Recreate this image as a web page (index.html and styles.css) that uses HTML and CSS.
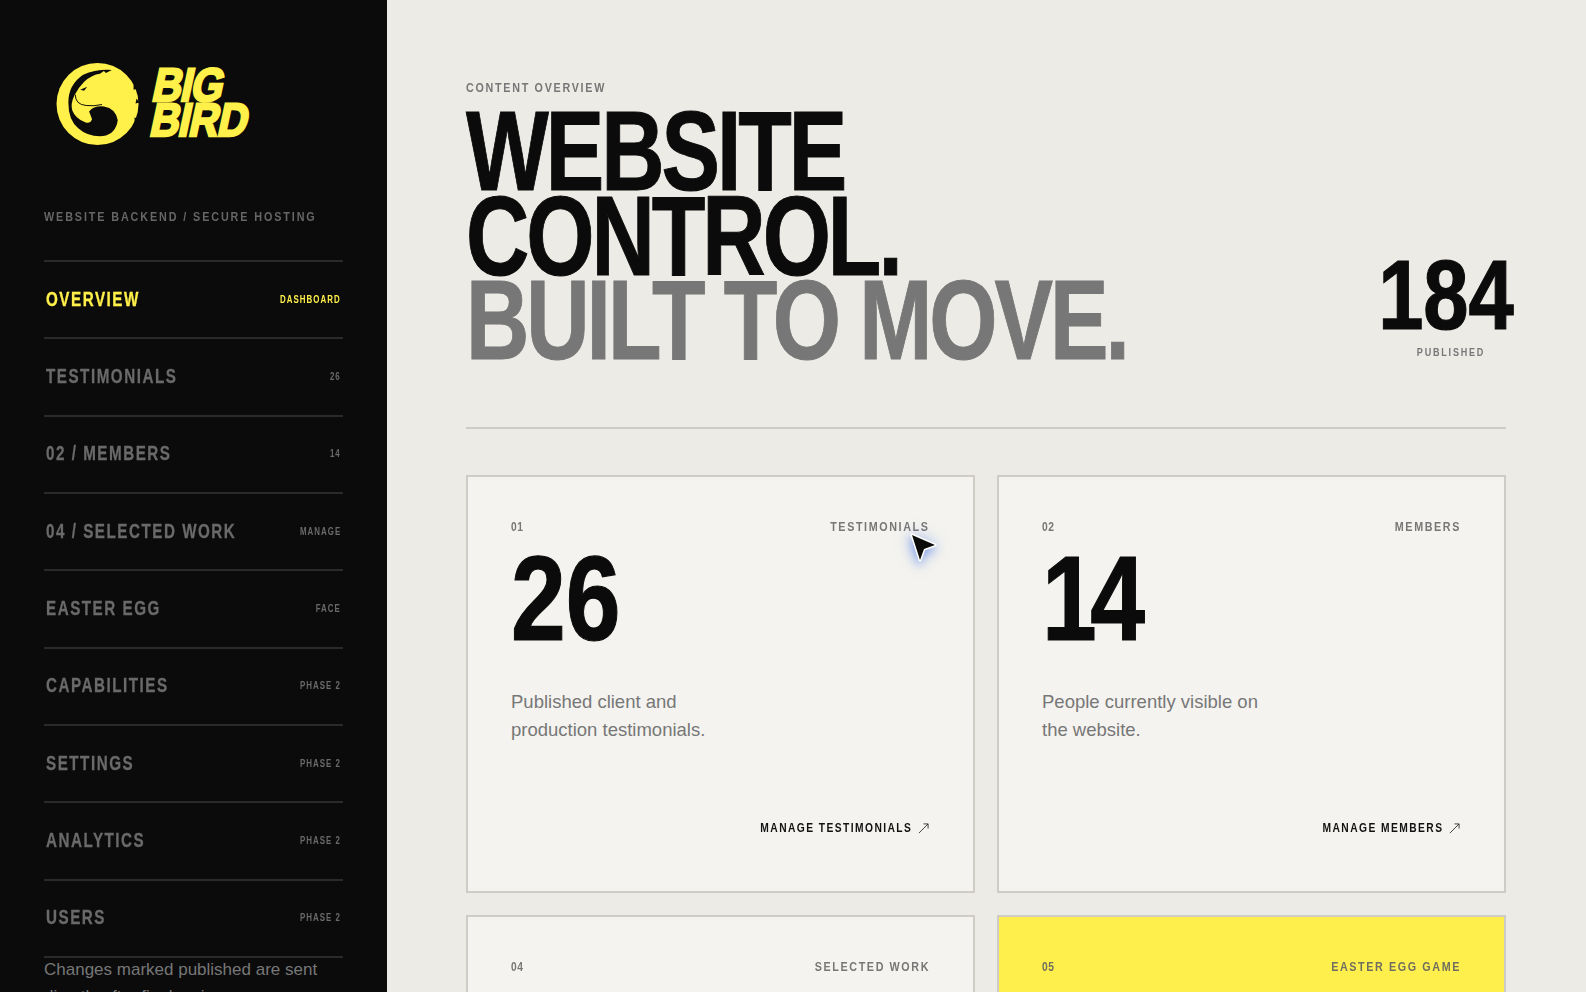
FILE: index.html
```html
<!DOCTYPE html>
<html lang="en">
<head>
<meta charset="utf-8">
<title>Big Bird — Content Overview</title>
<link rel="stylesheet" href="styles.css">
</head>
<body>
<div class="app">
  <aside class="sidebar">
    <div class="logo">
      <svg class="logo-mark" viewBox="0 0 84 84" aria-hidden="true">
        <circle cx="41.500" cy="41.500" r="41.500" fill="#fff04a"/>
        <path d="M56 7 Q40 6 27 12 Q12 22 12 40 Q12 58 22 66 Q32 75 47 74 Q60 72 62 58 Q60 46 48 44 Q38 43 33 49 L36 57 Q34 62 29 60 Q19 56 16 48 Q14 42 18 33 Q22 25 28 19 Q36 12 44 11 L48 8 L50 10 Z" fill="#0b0b0b"/>
        <path d="M19 32 Q19 42 30 43 Q38 44 46 42" fill="none" stroke="#0b0b0b" stroke-width="1"/>
        <path d="M24 27 L31 24 L28 28 Z" fill="#0b0b0b"/>
        <path d="M78 22 L82 26 L78 27 Z M81 36 L84 40 L80 41 Z M79 55 L84 58 L79 60 Z" fill="#0b0b0b"/>
      </svg>
      <div class="wordmark"><span class="wm-big">BIG</span><span>BIRD</span></div>
    </div>
    <p class="tagline">WEBSITE BACKEND / SECURE HOSTING</p>
    <nav class="nav">
      <a class="nav-row active"><span class="nav-name">OVERVIEW</span><span class="nav-meta">DASHBOARD</span></a>
      <a class="nav-row"><span class="nav-name">TESTIMONIALS</span><span class="nav-meta">26</span></a>
      <a class="nav-row"><span class="nav-name">02 / MEMBERS</span><span class="nav-meta">14</span></a>
      <a class="nav-row"><span class="nav-name">04 / SELECTED WORK</span><span class="nav-meta">MANAGE</span></a>
      <a class="nav-row"><span class="nav-name">EASTER EGG</span><span class="nav-meta">FACE</span></a>
      <a class="nav-row"><span class="nav-name">CAPABILITIES</span><span class="nav-meta">PHASE 2</span></a>
      <a class="nav-row"><span class="nav-name">SETTINGS</span><span class="nav-meta">PHASE 2</span></a>
      <a class="nav-row"><span class="nav-name">ANALYTICS</span><span class="nav-meta">PHASE 2</span></a>
      <a class="nav-row"><span class="nav-name">USERS</span><span class="nav-meta">PHASE 2</span></a>
    </nav>
    <p class="side-note">Changes marked published are sent directly after final review.</p>
  </aside>
  <main class="main">
    <header class="hero">
      <div class="hero-copy">
        <p class="eyebrow">CONTENT OVERVIEW</p>
        <h1 class="headline">
          <span class="h-line">WEBSITE</span>
          <span class="h-line">CONTROL.</span>
          <span class="h-line h-three">BUILT TO MOVE.</span>
        </h1>
      </div>
      <div class="stat">
        <div class="stat-num">184</div>
        <div class="stat-label">PUBLISHED</div>
      </div>
    </header>
    <section class="cards">
      <article class="card">
        <div class="card-top"><span class="idx">01</span><span class="lbl">TESTIMONIALS</span></div>
        <div class="card-num">26</div>
        <p class="card-text">Published client and<br>production testimonials.</p>
        <a class="card-link"><span class="link-text">MANAGE TESTIMONIALS</span>
          <svg class="arrow" viewBox="0 0 12 12" aria-hidden="true"><path d="M1 11 L11 1 M6 1 H11 V6" fill="none" stroke="#222" stroke-width="0.900"/></svg>
        </a>
      </article>
      <article class="card">
        <div class="card-top"><span class="idx">02</span><span class="lbl">MEMBERS</span></div>
        <div class="card-num card-num-tight">14</div>
        <p class="card-text">People currently visible on<br>the website.</p>
        <a class="card-link"><span class="link-text">MANAGE MEMBERS</span>
          <svg class="arrow" viewBox="0 0 12 12" aria-hidden="true"><path d="M1 11 L11 1 M6 1 H11 V6" fill="none" stroke="#222" stroke-width="0.900"/></svg>
        </a>
      </article>
      <article class="card">
        <div class="card-top"><span class="idx">04</span><span class="lbl">SELECTED WORK</span></div>
      </article>
      <article class="card card-yellow">
        <div class="card-top"><span class="idx">05</span><span class="lbl">EASTER EGG GAME</span></div>
      </article>
    </section>
  </main>
</div>
<svg class="cursor" viewBox="0 0 60 60" aria-hidden="true">
  <path class="cursor-arrow" d="M18 15 L41 25 L30 29 L26 40 Z"/>
</svg>
</body>
</html>
```
FILE: styles.css
```css
* { box-sizing: border-box; }
html, body { margin: 0; height: 100%; }
body {
  width: 1586px;
  height: 992px;
  overflow: hidden;
  position: relative;
  background: #edebe6;
  font-family: "Liberation Sans", Arial, sans-serif;
}
p, h1 { margin: 0; }
.app { display: flex; height: 992px; overflow: hidden; }

.sidebar {
  flex: 0 0 387px;
  height: 992px;
  overflow: hidden;
  background: #0b0b0b;
  padding: 63px 44px 0 44px;
}
.logo { display: flex; align-items: flex-start; margin-left: 12px; height: 82px; }
.logo-mark { width: 84px; height: 83px; flex: none; }
.wordmark {
  display: flex;
  flex-direction: column;
  margin: 4px 0 0 8px;
  color: #fff04a;
  font-size: 47px;
  font-weight: 700;
  line-height: 35px;
  letter-spacing: -1px;
  -webkit-text-stroke: 2.500px #fff04a;
  transform: skewX(-12deg) scaleX(.87);
  transform-origin: left bottom;
}
.wm-big { margin-left: -6px; }
.tagline {
  margin-top: 65px;
  height: 14px;
  line-height: 14px;
  font-size: 13px;
  font-weight: 700;
  letter-spacing: .175em;
  color: #666;
  white-space: nowrap;
  transform: scaleX(.83);
  transform-origin: left center;
}
.nav { margin-top: 36px; border-bottom: 2px solid #2a2a2a; }
.nav-row {
  display: flex;
  align-items: center;
  justify-content: space-between;
  height: 77.350px;
  padding: 0 2px 1px;
  border-top: 2px solid #2a2a2a;
  color: #6a6a6a;
}
.nav-name {
  flex: 1;
  min-width: 0;
  font-size: 20px;
  font-weight: 700;
  letter-spacing: .1em;
  white-space: nowrap;
  transform: scaleX(.76);
  transform-origin: left center;
  -webkit-text-stroke: .3px currentColor;
}
.nav-meta {
  flex: none;
  font-size: 10px;
  font-weight: 700;
  letter-spacing: .13em;
  white-space: nowrap;
  transform: scaleX(.79);
  transform-origin: right center;
}
.active { color: #fff04a; }
.side-note {
  margin-top: -2px;
  font-size: 17px;
  line-height: 27px;
  color: #777;
}

.main { flex: 1; padding: 81px 80px 0 79px; min-width: 0; }
.hero {
  display: flex;
  justify-content: space-between;
  align-items: flex-end;
  height: 348px;
  padding-bottom: 68px;
  border-bottom: 2px solid #cfccc5;
}
.hero-copy { flex: 1; min-width: 0; align-self: flex-start; }
.eyebrow {
  height: 14px;
  line-height: 14px;
  font-size: 13px;
  font-weight: 700;
  letter-spacing: .16em;
  color: #777;
  white-space: nowrap;
  transform: scaleX(.826);
  transform-origin: left center;
}
.headline {
  margin-top: 14px;
  font-size: 114px;
  font-weight: 700;
  letter-spacing: -4px;
  color: #0b0b0b;
  white-space: nowrap;
  transform: scaleX(.77);
  transform-origin: left top;
  -webkit-text-stroke: 1px #0b0b0b;
}
.h-line { display: block; height: 84.500px; line-height: 84.500px; }
.h-three { color: #777; -webkit-text-stroke-color: #777; }
.stat { flex: none; width: 110px; text-align: center; }
.stat-num {
  font-size: 98px;
  font-weight: 700;
  line-height: 88px;
  color: #0b0b0b;
  white-space: nowrap;
  transform: scaleX(.83);
  margin: 0 -35px 0 -45px;
  -webkit-text-stroke: 1.200px #0b0b0b;
}
.stat-label {
  margin-top: 7px;
  margin-bottom: 1px;
  font-size: 11px;
  font-weight: 700;
  letter-spacing: .2em;
  color: #777;
  white-space: nowrap;
  transform: scaleX(.82);
}
.cards {
  display: grid;
  grid-template-columns: 509px 509px;
  grid-auto-rows: 418px;
  gap: 22px;
  margin-top: 46px;
}
.card {
  display: flex;
  flex-direction: column;
  background: #f4f3ef;
  border: 2px solid #cfccc5;
  padding: 43px 43px 0;
}
.card-yellow { background: #ffef4d; }
.card-top {
  display: flex;
  justify-content: space-between;
  height: 14px;
  line-height: 14px;
  font-size: 12.500px;
  font-weight: 700;
  letter-spacing: .15em;
  color: #777;
}
.idx { letter-spacing: .05em; transform: scaleX(.82); transform-origin: left center; }
.lbl { transform: scaleX(.86); transform-origin: right center; white-space: nowrap; }
.card-yellow .card-top { color: #6f6f5f; }
.card-num {
  margin-top: 19px;
  font-size: 120px;
  font-weight: 700;
  line-height: 90px;
  color: #0b0b0b;
  transform: scaleX(.82);
  transform-origin: left top;
  -webkit-text-stroke: 1.200px #0b0b0b;
}
.card-num-tight { letter-spacing: -8px; }
.card-text {
  margin-top: 45px;
  font-size: 18.500px;
  line-height: 27.600px;
  color: #777;
}
.card-link {
  margin-top: auto;
  margin-bottom: 56px;
  display: flex;
  justify-content: flex-end;
  align-items: center;
  gap: 6px;
  font-size: 12.500px;
  font-weight: 700;
  letter-spacing: .14em;
  color: #111;
}
.link-text { transform: scaleX(.82); transform-origin: right center; white-space: nowrap; }
.arrow { width: 11px; height: 11px; margin-right: 1px; }
.cursor {
  position: absolute;
  left: 894px;
  top: 520px;
  width: 60px;
  height: 60px;
  filter: drop-shadow(-1px 4px 5px rgba(60, 110, 230, .5)) drop-shadow(0 0 8px rgba(60, 110, 230, .3));
}
.cursor-arrow {
  fill: #0b0b0b;
  stroke: #fff;
  stroke-width: 3px;
  stroke-linejoin: round;
  paint-order: stroke;
}
```
